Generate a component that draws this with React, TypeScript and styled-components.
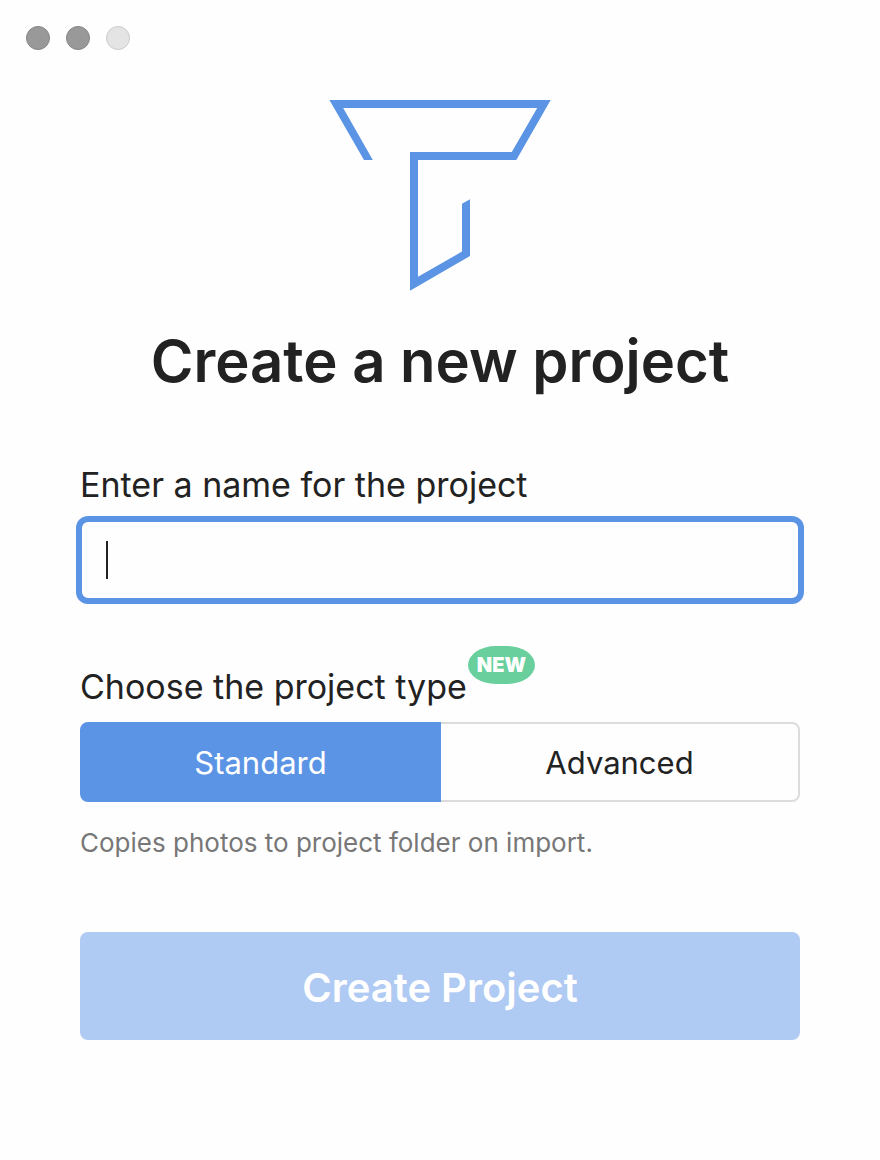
import React, { useState } from "react";
import styled, { createGlobalStyle } from "styled-components";

const color = {
  accent: "#5b94e5",
  accentMuted: "#afcaf3",
  text: "#222222",
  hint: "#777777",
  line: "#dcdcdc",
  badge: "#68cf9d",
  surface: "#fefefe",
};

const GlobalStyle = createGlobalStyle`
  *, *::before, *::after { box-sizing: border-box; }
  body {
    margin: 0;
    background: ${color.surface};
    color: ${color.text};
    font-family: Inter, "Liberation Sans", sans-serif;
  }
  button, input { font: inherit; }
`;

const Window = styled.div`
  display: flex;
  flex-direction: column;
  min-height: 100vh;
`;

const TitleBar = styled.header`
  display: flex;
  gap: 16px;
  padding: 26px;
`;

const WindowButton = styled.button<{ $inactive?: boolean }>`
  width: 24px;
  height: 24px;
  padding: 0;
  border: 1px solid ${(p) => (p.$inactive ? "#cbcbcb" : "#858585")};
  border-radius: 50%;
  background: ${(p) => (p.$inactive ? "#e4e4e4" : "#999999")};
`;

const Content = styled.main`
  display: flex;
  flex-direction: column;
  padding: 24px 80px 80px;
`;

const Logo = styled.svg`
  align-self: center;
  width: 222px;
  height: 191px;
  fill: ${color.accent};
`;

const Heading = styled.h1`
  margin: 33px 0 63px;
  font-size: 58px;
  line-height: 75px;
  font-weight: 600;
  text-align: center;
  white-space: nowrap;
`;

const Form = styled.form`
  display: flex;
  flex-direction: column;
`;

const FieldLabel = styled.label`
  margin-bottom: 12px;
  font-size: 34px;
  line-height: 46px;
`;

const InputFrame = styled.div`
  position: relative;
  display: flex;
  margin-bottom: 64px;
`;

const TextInput = styled.input`
  flex: 1;
  min-width: 0;
  height: 80px;
  padding: 0 24px;
  border: 2px solid ${color.accent};
  border-radius: 8px;
  outline: none;
  box-shadow: 0 0 0 4px ${color.accent};
  background: ${color.surface};
  color: ${color.text};
  caret-color: transparent;
  font-size: 31px;
`;

const Caret = styled.span`
  position: absolute;
  top: 21px;
  left: 26px;
  width: 2px;
  height: 38px;
  background: ${color.text};
`;

const TypeGroup = styled.fieldset`
  min-width: 0;
  margin: 0;
  padding: 0;
  border: 0;
`;

const TypeLegend = styled.legend`
  position: relative;
  margin-bottom: 12px;
  padding: 0;
  font-size: 34px;
  line-height: 46px;
`;

const Badge = styled.span`
  position: absolute;
  bottom: 26px;
  left: 100%;
  margin-left: 1px;
  padding: 0 9px;
  border-radius: 28px / 19px;
  background: ${color.badge};
  color: #ffffff;
  font-size: 20px;
  line-height: 38px;
  font-weight: 900;
`;

const Segments = styled.div`
  display: flex;
`;

const Segment = styled.label<{ $selected: boolean }>`
  position: relative;
  flex: 1;
  display: flex;
  align-items: center;
  justify-content: center;
  height: 80px;
  padding-top: 2px;
  border: 2px solid ${(p) => (p.$selected ? color.accent : color.line)};
  background: ${(p) => (p.$selected ? color.accent : color.surface)};
  color: ${(p) => (p.$selected ? "#ffffff" : color.text)};
  font-size: 31px;
  line-height: 40px;

  &:first-child {
    border-radius: 8px 0 0 8px;
    border-right-width: ${(p) => (p.$selected ? "2px" : "0")};
  }
  &:last-child {
    border-radius: 0 8px 8px 0;
    border-left-width: ${(p) => (p.$selected ? "2px" : "0")};
  }
`;

const SegmentRadio = styled.input`
  appearance: none;
  position: absolute;
  inset: 0;
  margin: 0;
`;

const Hint = styled.p`
  margin: 24px 0 72px;
  color: ${color.hint};
  font-size: 26px;
  line-height: 34px;
`;

const SubmitButton = styled.button`
  height: 108px;
  padding: 4px 0 0;
  border: 0;
  border-radius: 8px;
  background: ${color.accentMuted};
  color: #ffffff;
  font-size: 40px;
  line-height: 48px;
  font-weight: 600;
`;

const projectTypes = ["Standard", "Advanced"];

export default function App() {
  const [name, setName] = useState("");
  const [type, setType] = useState("Standard");

  return (
    <Window>
      <GlobalStyle />
      <TitleBar>
        <WindowButton type="button" aria-label="Close" />
        <WindowButton type="button" aria-label="Minimize" />
        <WindowButton type="button" aria-label="Zoom" $inactive />
      </TitleBar>
      <Content>
        <Logo viewBox="0 0 222 191" aria-hidden="true">
          <path d="M.4 0H221.7L187.3 60H89V176.8L133 151.6V103.8L141 99.2V156L81 190.8V52H182.8L208.2 8H14.2L43.8 60H35Z" />
        </Logo>
        <Heading>Create a new project</Heading>
        <Form onSubmit={(e) => e.preventDefault()}>
          <FieldLabel htmlFor="project-name">Enter a name for the project</FieldLabel>
          <InputFrame>
            <TextInput
              id="project-name"
              type="text"
              autoComplete="off"
              value={name}
              onChange={(e) => setName(e.target.value)}
            />
            {name === "" && <Caret />}
          </InputFrame>
          <TypeGroup>
            <TypeLegend>
              Choose the project type
              <Badge>NEW</Badge>
            </TypeLegend>
            <Segments>
              {projectTypes.map((option) => (
                <Segment key={option} $selected={option === type}>
                  <SegmentRadio
                    type="radio"
                    name="project-type"
                    value={option}
                    checked={option === type}
                    onChange={() => setType(option)}
                  />
                  {option}
                </Segment>
              ))}
            </Segments>
          </TypeGroup>
          <Hint>Copies photos to project folder on import.</Hint>
          <SubmitButton type="submit" disabled={name === ""}>
            Create Project
          </SubmitButton>
        </Form>
      </Content>
    </Window>
  );
}
